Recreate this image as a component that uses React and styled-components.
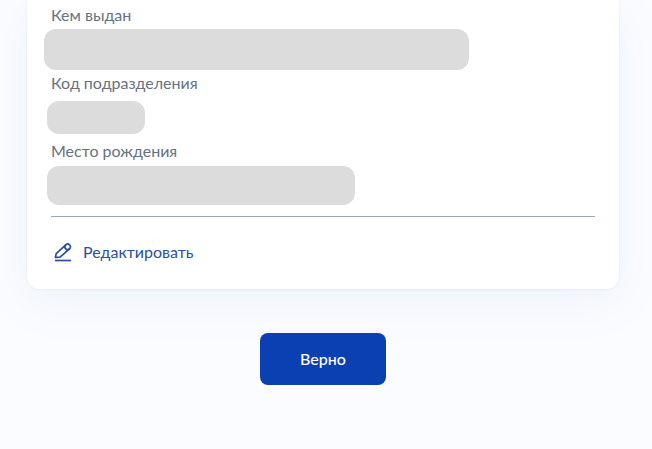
import React from "react";
import styled, { createGlobalStyle } from "styled-components";

const GlobalStyle = createGlobalStyle`
  *, *::before, *::after { box-sizing: border-box; }
  body {
    margin: 0;
    background: #fbfcff;
    font-family: Lato, "Open Sans", sans-serif;
    font-size: 16px;
    line-height: 24px;
  }
`;

const Page = styled.main`
  display: flex;
  flex-direction: column;
  gap: 44px;
  min-height: 100vh;
  padding: 0 33px 0 27px;
  overflow: hidden;
`;

const Card = styled.section`
  padding: 3px 24px 25px;
  background: #fff;
  border-radius: 0 0 12px 12px;
  box-shadow: 0 0 2px rgba(60, 100, 170, 0.16), 0 12px 48px rgba(70, 130, 220, 0.08);
`;

const Fields = styled.dl`
  margin: 0;
  padding-bottom: 9px;
  border-bottom: 1px solid #99aabf;
`;

const Label = styled.dt`
  color: #66727f;
`;

const Value = styled.dd`
  display: flex;
  align-items: center;
  height: 44px;
  margin: 0;
`;

const Redaction = styled.span`
  flex: 0 1 ${({ $width }) => $width}px;
  height: ${({ $height }) => $height}px;
  margin-left: -${({ $bleed }) => $bleed}px;
  background: #dcdcdc;
  border-radius: 12px;
`;

const EditButton = styled.button`
  display: flex;
  align-items: center;
  gap: 8px;
  margin-top: 23px;
  padding: 0;
  border: 0;
  background: none;
  color: #2a4f9f;
  font: inherit;
  cursor: pointer;
`;

const Icon = styled.svg`
  width: 24px;
  height: 24px;
`;

const ConfirmButton = styled.button`
  align-self: center;
  padding: 14px 40px;
  border: 0;
  border-radius: 8px;
  background: #0b40b3;
  color: #fff;
  font: inherit;
  font-weight: 500;
  cursor: pointer;
`;

const fields = [
  { label: "Кем выдан", width: 425, height: 41, bleed: 7 },
  { label: "Код подразделения", width: 98, height: 33, bleed: 4 },
  { label: "Место рождения", width: 308, height: 39, bleed: 4 },
];

function PencilIcon() {
  return (
    <Icon viewBox="0 0 24 24" fill="none" stroke="currentColor" strokeWidth="1.7" strokeLinecap="round" strokeLinejoin="round" aria-hidden="true">
      <path d="M4.4 17.4 5.2 13.6 14.8 4.9a2.7 2.7 0 0 1 3.8 0l.1.1a2.6 2.6 0 0 1 0 3.7L9 17.2Z" />
      <path d="M14.6 5.2a2.6 2.6 0 0 0 3.9 3.6" />
      <path d="M4 20.5h16" strokeLinecap="butt" />
    </Icon>
  );
}

export default function App() {
  return (
    <>
      <GlobalStyle />
      <Page>
        <Card>
          <Fields>
            {fields.map(({ label, width, height, bleed }) => (
              <React.Fragment key={label}>
                <Label>{label}</Label>
                <Value>
                  <Redaction $width={width} $height={height} $bleed={bleed} />
                </Value>
              </React.Fragment>
            ))}
          </Fields>
          <EditButton type="button">
            <PencilIcon />
            Редактировать
          </EditButton>
        </Card>
        <ConfirmButton type="button">Верно</ConfirmButton>
      </Page>
    </>
  );
}
